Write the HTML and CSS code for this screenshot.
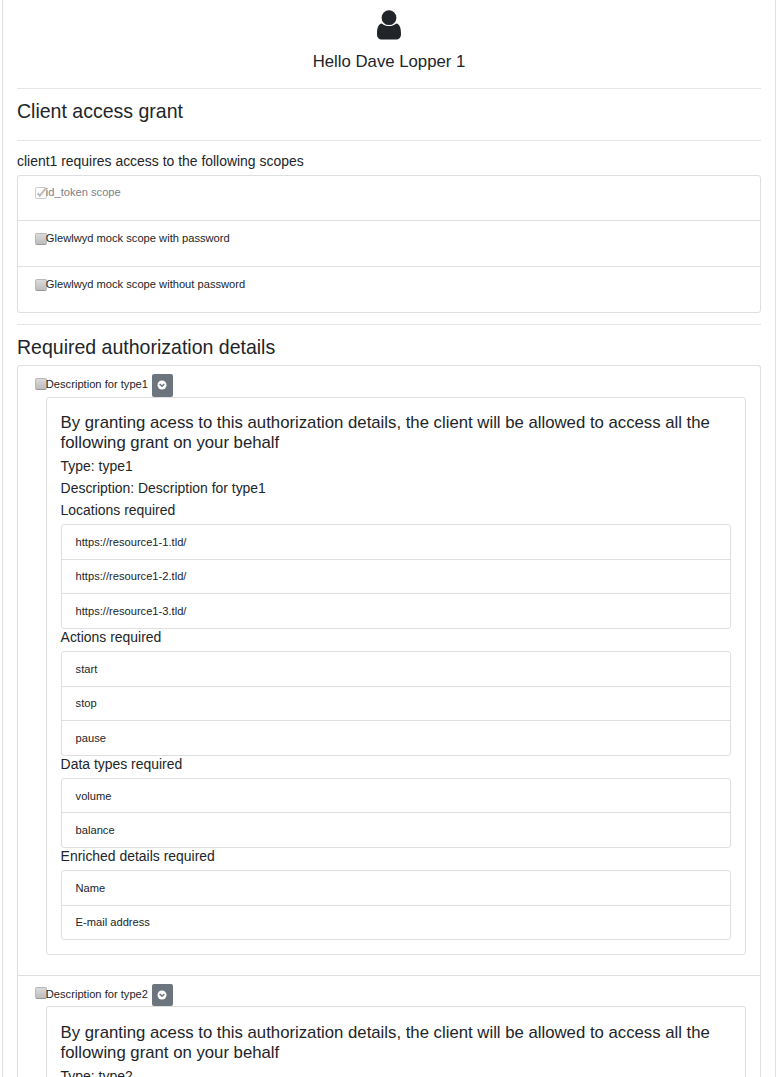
FILE: index.html
```
<!DOCTYPE html>
<html lang="en">
<head>
<meta charset="utf-8">
<title>Client access grant</title>
<link rel="stylesheet" href="styles.css">
</head>
<body>
<main class="panel">
  <header class="greeting">
    <svg class="user-icon" viewBox="0 0 24 30" aria-hidden="true"><path d="M4.900 13.400C7 15.400 9.300 16 12 16s5-.6 7.100-2.600C22.800 13.700 24 18 24 24.200 24 27.800 21.800 29.500 19 29.500H5C2.200 29.500 0 27.800 0 24.200 0 18 1.200 13.700 4.900 13.400Z"/><circle cx="12" cy="7.700" r="7.400"/></svg>
    <h4 class="title">Hello Dave Lopper 1</h4>
  </header>
  <hr class="rule">
  <h3 class="heading">Client access grant</h3>
  <hr class="rule rule-second">
  <h5 class="label">client1 requires access to the following scopes</h5>
  <ul class="list scopes">
    <li class="scope disabled"><span class="check checked"><svg viewBox="0 0 12 12"><path d="M2.500 6.200 4.800 8.700 10.800 1.300"/></svg></span>id_token scope</li>
    <li class="scope"><span class="check"></span>Glewlwyd mock scope with password</li>
    <li class="scope"><span class="check"></span>Glewlwyd mock scope without password</li>
  </ul>
  <hr class="rule rule-third">
  <h3 class="heading">Required authorization details</h3>
  <ul class="list details">
    <li class="detail">
      <div class="detail-head"><span class="check"></span><span class="name">Description for type1</span><button class="toggle" aria-label="Toggle details"><svg viewBox="0 0 10 10"><circle cx="5" cy="5" r="4.500"/><path d="M2.700 4 5 6.300 7.300 4"/></svg></button></div>
      <div class="card">
        <h4 class="title">By granting acess to this authorization details, the client will be allowed to access all the following grant on your behalf</h4>
        <h5 class="label">Type: type1</h5>
        <h5 class="label">Description: Description for type1</h5>
        <h5 class="label">Locations required</h5>
        <ul class="list"><li class="item">https://resource1-1.tld/</li><li class="item">https://resource1-2.tld/</li><li class="item">https://resource1-3.tld/</li></ul>
        <h5 class="label">Actions required</h5>
        <ul class="list"><li class="item">start</li><li class="item">stop</li><li class="item">pause</li></ul>
        <h5 class="label">Data types required</h5>
        <ul class="list"><li class="item">volume</li><li class="item">balance</li></ul>
        <h5 class="label">Enriched details required</h5>
        <ul class="list"><li class="item">Name</li><li class="item">E-mail address</li></ul>
      </div>
    </li>
    <li class="detail">
      <div class="detail-head"><span class="check"></span><span class="name">Description for type2</span><button class="toggle" aria-label="Toggle details"><svg viewBox="0 0 10 10"><circle cx="5" cy="5" r="4.500"/><path d="M2.700 4 5 6.300 7.300 4"/></svg></button></div>
      <div class="card">
        <h4 class="title">By granting acess to this authorization details, the client will be allowed to access all the following grant on your behalf</h4>
        <h5 class="label">Type: type2</h5>
      </div>
    </li>
  </ul>
</main>
</body>
</html>
```
FILE: styles.css
```
* { box-sizing: border-box; }
html { height: 100%; overflow: hidden; }
body {
  height: 1077px;
  margin: 0;
  overflow: hidden;
  background: #fff;
  color: #212529;
  font: 11.15px/16.8px "Liberation Sans", Arial, sans-serif;
}
h3, h4, h5, ul { margin: 0; padding: 0; font-weight: 500; }
ul { list-style: none; font-weight: 400; }
.panel {
  margin: 0 2px;
  padding: 10px 14px 0;
  border: solid #dfdfdf;
  border-width: 0 1px;
}
.greeting { text-align: center; height: 78px; }
.user-icon { display: block; width: 24px; height: 30px; margin: 0 auto 12px; fill: #212529; }
.title { font-size: 16.74px; line-height: 20px; margin-bottom: 5px; }
.title + .label { margin-bottom: 4.9px; }
.heading { font-size: 19.53px; line-height: 23.5px; }
.label { font-size: 13.95px; line-height: 16.8px; margin-bottom: 5.5px; }
.rule { height: 1px; margin: 0 0 11px; border: 0; background: #e5e5e5; }
.rule-second { margin: 16.5px 0 12px; }
.rule-third { margin-top: 11px; }
.list { border: 1px solid #dfdfdf; border-radius: 3px; }
.list > li + li { border-top: 1px solid #dfdfdf; }
.item { height: 34.5px; padding: 8.6px 13.6px 0; }
.list > .item:first-child { height: 33.5px; }
.scopes { height: 138px; }
.scope { display: flex; height: 46px; padding: 9px 17px 0; }
.scope:first-child { height: 44px; padding-top: 8px; }
.disabled { color: #7b8187; }
.check {
  flex: none;
  width: 12px;
  height: 12px;
  margin: 3px -1.2px 0 0;
  border: 1px solid #b8b8b8;
  border-bottom-color: #999;
  border-radius: 2px;
  background: linear-gradient(#dadada, #bdbdbd);
}
.checked { background: #fff; border-color: #ccc; }
.checked svg { display: block; width: 12px; height: 12px; margin: -1px; overflow: visible; fill: none; stroke: #bdbdbd; stroke-width: 2; }
.details { margin-top: 5px; border-bottom: 0; }
.detail { padding: 8px 14px 20px 28px; }
.detail-head { display: flex; align-items: flex-start; height: 23px; margin-left: -11px; }
.detail-head .check { margin-top: 4px; }
.name { margin-top: 2px; }
.detail + .detail .detail-head { height: 22px; }
.detail + .detail .check { margin-top: 3px; }
.toggle {
  display: grid;
  place-items: center;
  align-self: stretch;
  width: 21px;
  margin: 0 0 0 3.7px;
  padding: 0;
  border: 0;
  border-radius: 2px;
  background: #6c757d;
}
.toggle svg { width: 10px; height: 10px; margin-top: -1px; fill: #fff; }
.toggle path { fill: none; stroke: #6c757d; stroke-width: 1.5; }
.card { padding: 15.3px 14px 14px 13.6px; border: 1px solid #dfdfdf; border-radius: 3px; }
.card .list { margin-left: .4px; }
```
